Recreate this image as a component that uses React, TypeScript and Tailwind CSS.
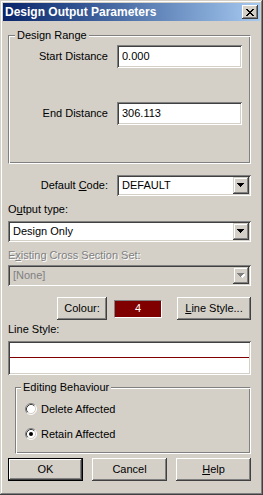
import React from 'react';

const raised =
  'shadow-[inset_-1px_-1px_#404040,inset_1px_1px_#ffffff,inset_-2px_-2px_#808080,inset_2px_2px_#d4d0c8]';
const raisedSmall =
  'shadow-[inset_-1px_-1px_#404040,inset_1px_1px_#d4d0c8,inset_-2px_-2px_#808080,inset_2px_2px_#ffffff]';
const sunken =
  'shadow-[inset_1px_1px_#808080,inset_-1px_-1px_#ffffff,inset_2px_2px_#404040,inset_-2px_-2px_#d4d0c8]';
const etched =
  'border border-t-[#808080] border-l-[#808080] border-r-white border-b-white shadow-[inset_1px_1px_#ffffff,inset_-1px_-1px_#808080]';

const Arrow: React.FC<{ disabled?: boolean }> = ({ disabled }) => (
  <svg width="8" height="5" viewBox="0 0 8 5" shapeRendering="crispEdges">
    {disabled && <path d="M2 1h7v1h-1v1h-1v1h-1v1h-1z" fill="#ffffff" />}
    <path d="M0 0h7v1h-1v1h-1v1h-1v1h-1v-1h-1v-1h-1v-1h-1z" fill={disabled ? '#808080' : '#000000'} />
  </svg>
);

const Combo: React.FC<{ text: string; disabled?: boolean; className?: string }> = ({ text, disabled, className }) => (
  <div
    className={`flex h-[21px] items-center p-[2px] ${sunken} ${disabled ? 'bg-[#d4d0c8] text-[#808080]' : 'bg-white text-black'} ${className ?? ''}`}
  >
    <span className="flex-1 pl-[3px] leading-[13px]">{text}</span>
    <div className={`flex h-[17px] w-[16px] items-center justify-center bg-[#d4d0c8] ${raisedSmall}`}>
      <Arrow disabled={disabled} />
    </div>
  </div>
);

const Edit: React.FC<{ value: string }> = ({ value }) => (
  <div className={`flex h-[23px] w-[125px] items-center bg-white pl-[5px] ${sunken}`}>{value}</div>
);

const Button: React.FC<{ children: React.ReactNode; className?: string; isDefault?: boolean }> = ({
  children,
  className,
  isDefault,
}) =>
  isDefault ? (
    <div className={`h-[23px] border border-black ${className ?? ''}`}>
      <div className={`flex h-full w-full items-center justify-center bg-[#d4d0c8] ${raised}`}>{children}</div>
    </div>
  ) : (
    <div className={`flex h-[23px] items-center justify-center bg-[#d4d0c8] ${raised} ${className ?? ''}`}>
      {children}
    </div>
  );

const Radio: React.FC<{ checked?: boolean }> = ({ checked }) => (
  <svg width="12" height="12" viewBox="0 0 12 12">
    <circle cx="6" cy="6" r="5" fill="#ffffff" />
    <path d="M2.11 9.89 A5.5 5.5 0 0 1 9.89 2.11" fill="none" stroke="#808080" />
    <path d="M9.89 2.11 A5.5 5.5 0 0 1 2.11 9.89" fill="none" stroke="#ffffff" />
    <path d="M2.82 9.18 A4.5 4.5 0 0 1 9.18 2.82" fill="none" stroke="#404040" />
    <path d="M9.18 2.82 A4.5 4.5 0 0 1 2.82 9.18" fill="none" stroke="#d4d0c8" />
    {checked && <circle cx="6" cy="6" r="2" fill="#000000" />}
  </svg>
);

export default function App() {
  return (
    <div
      className={`flex h-[495px] w-[263px] flex-col bg-[#d4d0c8] p-[3px] font-['Liberation_Sans',Arial,sans-serif] text-[11px] leading-[13px] text-black shadow-[inset_-1px_-1px_#404040,inset_1px_1px_#d4d0c8,inset_-2px_-2px_#808080,inset_2px_2px_#ffffff]`}
    >
      {/* Title bar */}
      <div className="flex h-[18px] items-center bg-linear-to-r from-[#0a246a] to-[#a6caf0] pl-[2px] pr-[2px]">
        <span className="flex-1 text-[12px] font-bold text-white">Design Output Parameters</span>
        <div className={`flex h-[14px] w-[16px] items-center justify-center bg-[#d4d0c8] ${raised}`}>
          <svg width="8" height="7" viewBox="0 0 8 7" shapeRendering="crispEdges">
            <path
              d="M0 0h2v1h-2zM6 0h2v1h-2zM1 1h2v1h-2zM5 1h2v1h-2zM2 2h4v1h-4zM3 3h2v1h-2zM2 4h4v1h-4zM1 5h2v1h-2zM5 5h2v1h-2zM0 6h2v1h-2zM6 6h2v1h-2z"
              fill="#000000"
            />
          </svg>
        </div>
      </div>

      {/* Body */}
      <div className="flex flex-col pl-[5px] pr-[9px] pt-[14px]">
        {/* Design Range */}
        <div className={`relative h-[129px] pr-[8px] pt-[9px] ${etched}`}>
          <span className="absolute -top-[7px] left-[6px] bg-[#d4d0c8] px-[2px]">Design Range</span>
          <div className="flex items-center justify-end gap-[9px]">
            <span>Start Distance</span>
            <Edit value="0.000" />
          </div>
          <div className="mt-[34px] flex items-center justify-end gap-[9px]">
            <span>End Distance</span>
            <Edit value="306.113" />
          </div>
        </div>

        {/* Default code */}
        <div className="mt-[11px] flex items-center justify-end gap-[9px]">
          <span>
            Default <u>C</u>ode:
          </span>
          <Combo text="DEFAULT" className="w-[134px]" />
        </div>

        <span className="mt-[7px]">
          O<u>u</u>tput type:
        </span>
        <Combo text="Design Only" className="mt-[5px]" />

        <span className="mt-[7px] text-[#808080] [text-shadow:1px_1px_#ffffff]">
          E<u>x</u>isting Cross Section Set:
        </span>
        <Combo text="[None]" disabled className="mt-[3px]" />

        {/* Colour row */}
        <div className="mt-[11px] flex items-center pl-[49px]">
          <Button className="w-[50px]">Colour:</Button>
          <div className="ml-[7px] flex h-[18px] w-[48px] items-center justify-center border border-t-[#808080] border-l-[#808080] border-r-white border-b-white bg-[#800000] text-white">
            4
          </div>
          <Button className="ml-[15px] w-[74px]">
            <span>
              <u>L</u>ine Style...
            </span>
          </Button>
        </div>

        <span className="mt-[3px]">Line Style:</span>
        <div className={`mt-[5px] h-[34px] bg-white p-[2px] ${sunken}`}>
          <div className="mt-[14px] h-px bg-[#800000]" />
        </div>

        {/* Editing Behaviour */}
        <div className={`relative ml-[7px] mt-[12px] h-[67px] pl-[9px] pt-[14px] ${etched}`}>
          <span className="absolute -top-[7px] left-[5px] bg-[#d4d0c8] px-[2px]">Editing Behaviour</span>
          <div className="flex h-[14px] items-center gap-[4px]">
            <Radio />
            <span>Delete Affected</span>
          </div>
          <div className="mt-[11px] flex h-[14px] items-center gap-[4px]">
            <Radio checked />
            <span>Retain Affected</span>
          </div>
        </div>

        {/* Buttons */}
        <div className="mt-[4px] flex gap-[9px]">
          <Button isDefault className="w-[75px]">
            OK
          </Button>
          <Button className="w-[75px]">Cancel</Button>
          <Button className="w-[75px]">
            <span>
              <u>H</u>elp
            </span>
          </Button>
        </div>
      </div>
    </div>
  );
}
